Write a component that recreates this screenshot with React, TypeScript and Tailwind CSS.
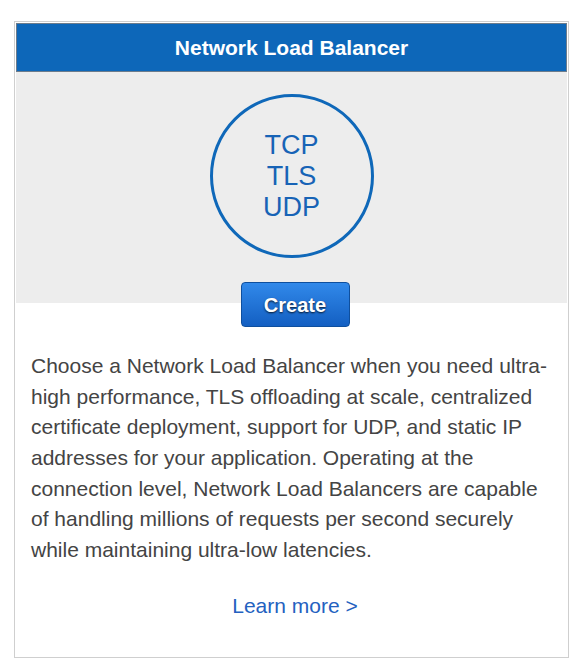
export default function App() {
  return (
    <div className="w-[572px] h-[658px] bg-white pt-[21px] pl-[14px] font-['Liberation_Sans',Arial,sans-serif]">
      <div className="w-[555px] h-[637px] border border-[#cfcfcf] p-px flex flex-col">
        <div className="h-[49px] bg-[#0d67b9] border border-[#6c7c8c] flex items-center justify-center">
          <span className="text-white font-bold text-[21px] leading-none">Network Load Balancer</span>
        </div>
        <div className="bg-[#ededed] pt-[22px] pb-[45px] flex justify-center">
          <div className="w-[164px] h-[164px] rounded-full border-[3.5px] border-[#0f68b9] flex flex-col items-center justify-center text-[#1763b6] text-[27px] leading-[31px]">
            <span>TCP</span>
            <span>TLS</span>
            <span>UDP</span>
          </div>
        </div>
        <div className="flex justify-center pl-[7px] -mt-[21px]">
          <button className="w-[109px] h-[45px] rounded-[4px] border border-[#0e4f9e] bg-gradient-to-b from-[#3189ea] to-[#135fc2] text-white font-bold text-[20px] [text-shadow:0_1px_2px_rgba(0,0,0,0.8)]">
            Create
          </button>
        </div>
        <p className="mt-[24px] px-[15px] text-[21px] leading-[30.67px] text-[#444] whitespace-nowrap">
          Choose a Network Load Balancer when you need ultra-
          <br />
          high performance, TLS offloading at scale, centralized
          <br />
          certificate deployment, support for UDP, and static IP
          <br />
          addresses for your application. Operating at the
          <br />
          connection level, Network Load Balancers are capable
          <br />
          of handling millions of requests per second securely
          <br />
          while maintaining ultra-low latencies.
        </p>
        <div className="mt-[28px] flex justify-center pl-[7px]">
          <a href="#" className="text-[#2461c0] text-[21px] leading-[24px]">
            Learn more &gt;
          </a>
        </div>
      </div>
    </div>
  );
}
